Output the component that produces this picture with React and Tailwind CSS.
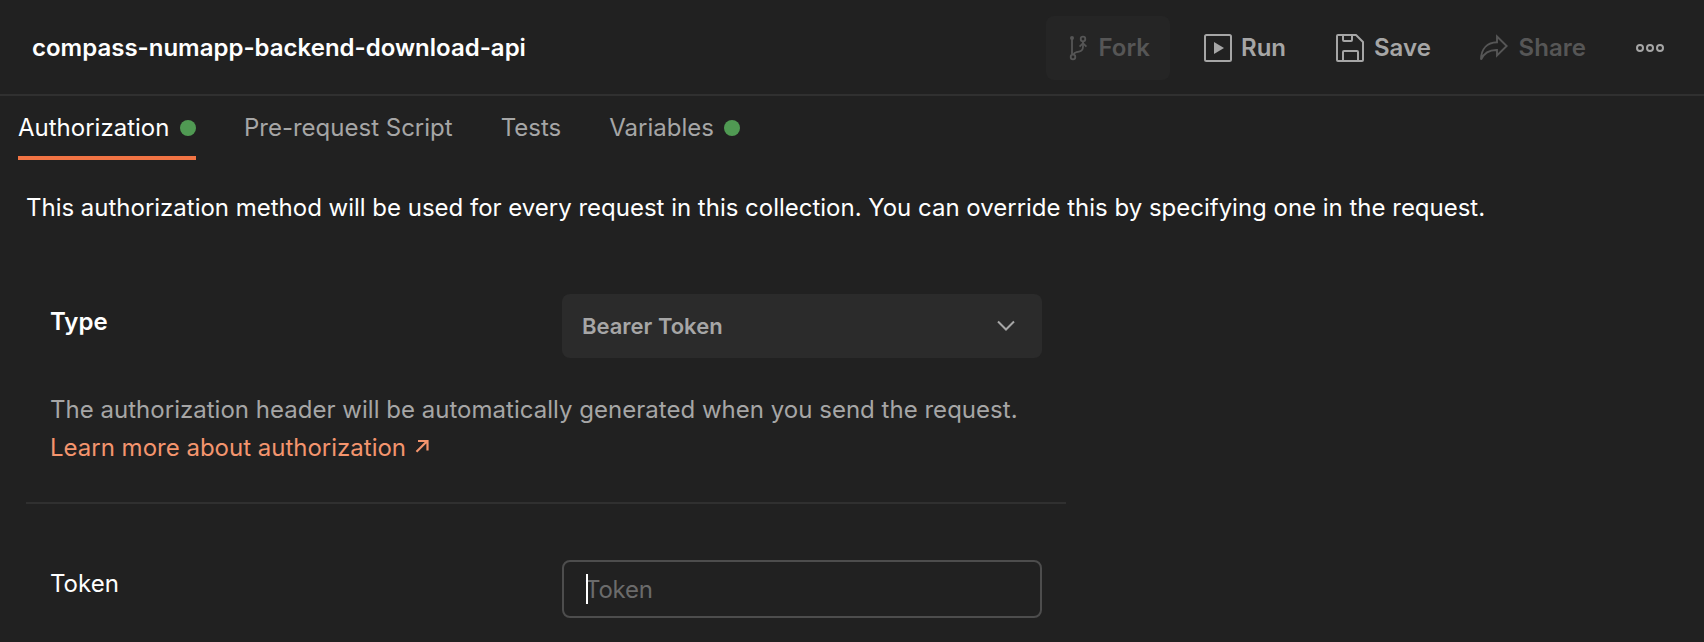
function ForkIcon() {
  return (
    <svg width="20" height="28" viewBox="0 0 20 28" fill="none" stroke="currentColor" strokeWidth="1.8" className="shrink-0">
      <circle cx="4" cy="4" r="2" fill="currentColor" stroke="none" />
      <path d="M4 4v16" />
      <circle cx="5" cy="23" r="2.3" />
      <circle cx="15" cy="5" r="2.3" />
      <path d="M15 8v4.500c0 3-1.500 4.700-4 5.200l-2.500.5c-2 .4-2.800 1.300-3.200 2.800" />
      <path d="M11.600 12.600 15 9.200l3.400 3.400" />
    </svg>
  );
}

function RunIcon() {
  return (
    <svg width="28" height="28" viewBox="0 0 28 28" className="shrink-0">
      <rect x="1" y="1" width="26" height="26" rx="1.500" fill="none" stroke="currentColor" strokeWidth="2" />
      <path d="M10 8v12l10-6z" fill="currentColor" />
    </svg>
  );
}

function SaveIcon() {
  return (
    <svg width="28" height="28" viewBox="0 0 28 28" fill="none" stroke="currentColor" strokeWidth="2" strokeLinejoin="round" className="shrink-0">
      <path d="M2 1h18l7 7v18a1 1 0 0 1-1 1H2a1 1 0 0 1-1-1V2a1 1 0 0 1 1-1z" />
      <path d="M7 1v5a1 1 0 0 0 1 1h7a1 1 0 0 0 1-1V1" />
      <path d="M7 27v-9a1 1 0 0 1 1-1h13a1 1 0 0 1 1 1v9" />
    </svg>
  );
}

function ShareIcon() {
  return (
    <svg width="28" height="28" viewBox="0 0 28 28" fill="none" stroke="currentColor" strokeWidth="1.900" className="shrink-0">
      <path d="M17 2.500 26.700 12 17 21.500V16C10 15.800 4.500 18 1 25.500 1.200 14.500 7.500 8.600 17 8.300z" />
    </svg>
  );
}

function MoreIcon() {
  return (
    <svg width="28" height="8" viewBox="0 0 28 8" fill="none" stroke="currentColor" strokeWidth="2" className="shrink-0">
      <circle cx="4" cy="4" r="3" />
      <circle cx="14" cy="4" r="3" />
      <circle cx="24" cy="4" r="3" />
    </svg>
  );
}

function Tab({ label, dot, active }) {
  return (
    <button
      className={
        active
          ? "flex h-16 items-center gap-[10.6px] border-b-4 border-[#f27444] pt-1 text-white"
          : "flex h-16 items-center gap-[10.6px] border-b-4 border-transparent pt-1 text-[#a6a6a6]"
      }
    >
      <span>{label}</span>
      {dot && <span className="size-4 rounded-full bg-[#509a53]" />}
    </button>
  );
}

export default function App() {
  return (
    <div className="h-[642px] w-[1704px] overflow-hidden bg-[#212121] font-['Inter','Liberation_Sans',sans-serif] text-2xl text-white">
      <header className="flex h-24 items-center justify-between border-b-2 border-[#303030] pt-0.5 pr-10 pl-8">
        <h1 className="font-semibold">compass-numapp-backend-download-api</h1>
        <div className="flex items-center font-semibold text-[#a6a6a6]">
          <button className="mr-[34px] flex h-16 w-31 items-center gap-[10.500px] rounded-lg bg-[#252525] pl-[22px] text-[#565656]">
            <ForkIcon />
            Fork
          </button>
          <button className="flex w-33 items-center gap-[9px]">
            <RunIcon />
            Run
          </button>
          <button className="flex w-36 items-center gap-2.5">
            <SaveIcon />
            Save
          </button>
          <button className="flex w-39 items-center gap-[10.600px] text-[#565656]">
            <ShareIcon />
            Share
          </button>
          <button aria-label="More actions">
            <MoreIcon />
          </button>
        </div>
      </header>

      <nav className="flex gap-12 pl-[18px]">
        <Tab label="Authorization" dot active />
        <Tab label="Pre-request Script" />
        <Tab label="Tests" />
        <Tab label="Variables" dot />
      </nav>

      <main className="pl-[26px]">
        <p className="pt-7 leading-10 tracking-[-0.01px]">
          This authorization method will be used for every request in this collection. You can override this by specifying one in the request.
        </p>

        <section className="mt-[66px] h-[210px] w-[1040px] border-b-2 border-[#303030] pl-6">
          <div className="flex">
            <h2 className="w-128 pt-2 leading-10 font-semibold">Type</h2>
            <button className="flex h-16 w-120 items-center justify-between rounded-lg bg-[#2b2b2b] pr-[26px] pl-5 text-[22px] font-semibold text-[#a6a6a6]">
              <span className="pt-0.5">Bearer Token</span>
              <svg width="20" height="12" viewBox="0 0 20 12" fill="none" stroke="currentColor" strokeWidth="2">
                <path d="M2 1.500 10 9.500l8-8" />
              </svg>
            </button>
          </div>
          <div className="mt-[33px] leading-[38px] text-[#a6a6a6]">
            <p className="tracking-[0.02px]">The authorization header will be automatically generated when you send the request.</p>
            <a className="flex text-[#f4956e]">
              Learn more about authorization
              <svg width="14" height="14" viewBox="0 0 14 14" fill="none" stroke="currentColor" strokeWidth="2.200" className="mt-[10px] ml-[9px]">
                <path d="M1.500 12.700 12 2.200M3 2h9.500v9.500" />
              </svg>
            </a>
          </div>
        </section>

        <section className="flex pt-14 pl-6">
          <label className="w-128 pt-1 leading-10">Token</label>
          <div className="relative flex h-[58px] w-120 items-center rounded-lg border-2 border-[#4d4d4d] pt-0.5 pl-[21px] text-[#6b6b6b]">
            <span className="tracking-[-0.2px]">Token</span>
            <span className="absolute top-3 left-[22px] h-[30px] w-0.5 bg-white" />
          </div>
        </section>
      </main>
    </div>
  );
}
